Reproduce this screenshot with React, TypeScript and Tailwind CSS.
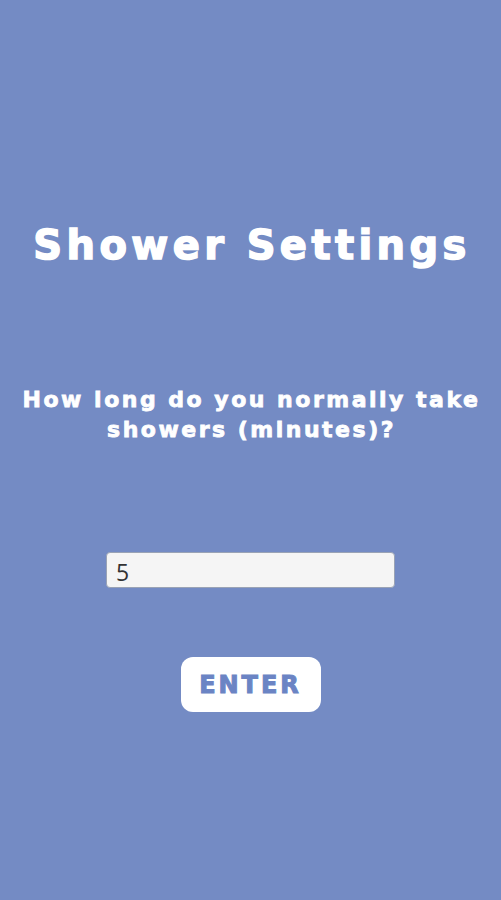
import { useState } from "react";

export default function App() {
  const [minutes, setMinutes] = useState("5");

  return (
    <div className="min-h-[900px] w-full bg-[#748bc4] flex flex-col items-center font-['DejaVu_Sans',sans-serif]">
      <h1 className="mt-[222px] pl-[3px] text-[40px] leading-[46px] font-bold text-white tracking-[4.4px] [-webkit-text-stroke:1.5px_white]">
        Shower Settings
      </h1>

      <p className="mt-[117px] pl-[2px] text-center text-[22px] leading-[30px] font-bold text-white tracking-[2.5px] [-webkit-text-stroke:0.8px_white]">
        How long do you normally take
        <br />
        showers (minutes)?
      </p>

      <input
        type="text"
        autoFocus
        value={minutes}
        onChange={(e) => setMinutes(e.target.value)}
        className="mt-[107px] w-[289px] h-[36px] px-[9px] pt-[4px] rounded-[4px] border border-[#9aa3b5] bg-[#f5f5f5] text-[23px] text-[#333] caret-[#333] font-['Open_Sans',sans-serif] outline-none"
      />

      <button
        type="button"
        className="mt-[69px] w-[140px] h-[55px] rounded-[12px] bg-white text-[#6b84c4] text-[24px] font-bold tracking-[3px] [-webkit-text-stroke:1px_#6b84c4]"
      >
        ENTER
      </button>
    </div>
  );
}
